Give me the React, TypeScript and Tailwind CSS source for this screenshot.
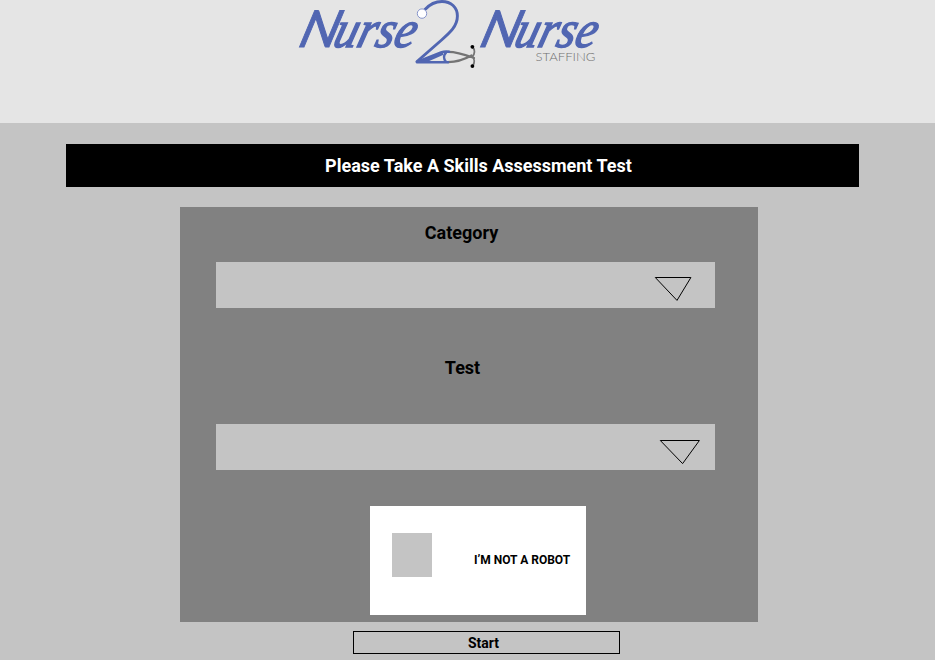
function Wordmark({ x }: { x: number }) {
  return (
    <g transform={`translate(${x} 47.3) skewX(-16)`} fill="#5166b2" stroke="#5166b2">
      <text x="-3" y="-0.5" fontSize="51" textLength="39" lengthAdjust="spacingAndGlyphs" strokeWidth="0.9" className="font-[Lato,sans-serif] font-normal italic">N</text>
      <text x="32" y="-0.4" fontSize="52" textLength="81" lengthAdjust="spacingAndGlyphs" strokeWidth="1.5" className="font-['Liberation_Serif',serif] font-normal italic">urse</text>
    </g>
  );
}

function Logo() {
  return (
    <svg width="310" height="75" viewBox="295 0 310 75" role="img" aria-label="Nurse 2 Nurse Staffing" className="overflow-visible">
      <Wordmark x={299.5} />
      <Wordmark x={480.5} />
      <g fill="none" strokeLinecap="round">
        <path d="M448 51.8C458 51.8 466 55 474 58M448 62.2C458 62 467 58 471.5 55.5" stroke="#747474" strokeWidth="2.2" />
        <path d="M472.5 47C475.5 50 474.5 54 472.5 56.5C474.5 59 475 63 472.5 66" stroke="#747474" strokeWidth="1.9" />
        <path d="M425 9.5C430 4 436 1.5 442 1.5C451 1.5 457.4 7.5 457.4 16C457.4 28 447 35 437 44L417 61.5" stroke="#5166b2" strokeWidth="2.9" />
        <path d="M417 62.2H448M417 62L441 52.5Q445 51 449 51.8M446 52.5C443.5 55 443.5 59 446 62" stroke="#5166b2" strokeWidth="2.6" />
      </g>
      <path d="M416 62L443 52L443 55L427 62Z" fill="#5166b2" />
      <circle cx="422" cy="13.6" r="4.7" fill="#fff" stroke="#7a8ac6" strokeWidth="0.9" />
      <circle cx="472.4" cy="46.8" r="1.9" />
      <circle cx="472.4" cy="66.1" r="1.9" />
      <text x="535.5" y="61.4" fontSize="11.5" fill="#707070" textLength="60" lengthAdjust="spacingAndGlyphs" className="font-[Lato,sans-serif] font-light">STAFFING</text>
    </svg>
  );
}

function SelectField({ points, label }: { points: string; label: string }) {
  return (
    <button type="button" aria-label={label} className="flex h-[46px] w-[499px] justify-end bg-[#c4c4c4]">
      <svg width="75" height="46" viewBox="0 0 75 46" fill="none" stroke="#000" strokeWidth="1">
        <polygon points={points} />
      </svg>
    </button>
  );
}

export default function App() {
  return (
    <div className="h-[660px] w-[935px] overflow-hidden bg-[#c4c4c4] font-[Roboto,sans-serif] font-bold text-black">
      <header className="h-[123px] bg-[#e5e5e5] pl-[295px]">
        <Logo />
      </header>
      <main className="pt-[21px]">
        <h1 className="ml-[66px] flex h-[43px] w-[793px] items-center justify-center bg-black pl-8 text-lg text-white">
          Please Take A Skills Assessment Test
        </h1>
        <section className="mt-5 ml-[180px] flex h-[415px] w-[578px] flex-col bg-[#818181] pl-9">
          <h2 className="mt-3 h-[43px] w-[491px] text-center text-lg">Category</h2>
          <SelectField label="Category" points="15.3,15.5 50.9,15.5 37,38.4" />
          <h2 className="mt-[46px] h-[70px] w-[493px] text-center text-lg">Test</h2>
          <SelectField label="Test" points="20.3,16.5 59.4,16.5 42.6,39.6" />
          <div className="mt-9 ml-[154px] flex h-[109px] w-[216px] bg-white pt-[27px] pl-[22px]">
            <span className="h-11 w-10 bg-[#c4c4c4]" />
            <span className="ml-[42px] pt-[19px] text-xs leading-4 whitespace-nowrap">I’M NOT A ROBOT</span>
          </div>
        </section>
        <button type="button" className="mt-[9px] ml-[353px] flex h-[23px] w-[267px] items-center justify-center border border-black pr-1.5 text-sm">
          Start
        </button>
      </main>
    </div>
  );
}
